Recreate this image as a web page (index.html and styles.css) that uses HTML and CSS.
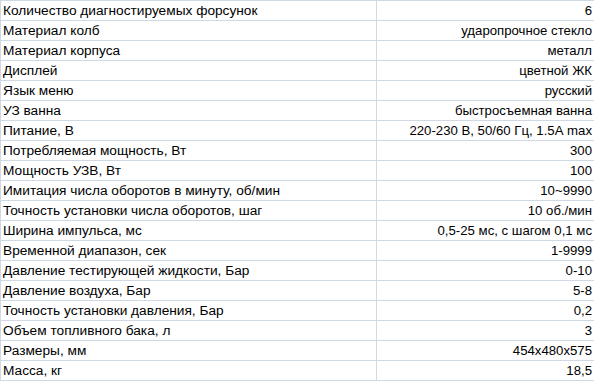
FILE: index.html
```html
<!DOCTYPE html>
<html lang="ru">
<head>
<meta charset="utf-8">
<title>Характеристики</title>
<link rel="stylesheet" href="styles.css">
</head>
<body>
<div class="sheet">
  <div class="row"><div class="name">Количество диагностируемых форсунок</div><div class="val">6</div></div>
  <div class="row"><div class="name">Материал колб</div><div class="val">ударопрочное стекло</div></div>
  <div class="row"><div class="name">Материал корпуса</div><div class="val">металл</div></div>
  <div class="row"><div class="name">Дисплей</div><div class="val">цветной ЖК</div></div>
  <div class="row"><div class="name">Язык меню</div><div class="val">русский</div></div>
  <div class="row"><div class="name">УЗ ванна</div><div class="val">быстросъемная ванна</div></div>
  <div class="row"><div class="name">Питание, В</div><div class="val">220-230 В, 50/60 Гц, 1.5А max</div></div>
  <div class="row"><div class="name">Потребляемая мощность, Вт</div><div class="val">300</div></div>
  <div class="row"><div class="name">Мощность УЗВ, Вт</div><div class="val">100</div></div>
  <div class="row"><div class="name">Имитация числа оборотов в минуту, об/мин</div><div class="val">10~9990</div></div>
  <div class="row"><div class="name">Точность установки числа оборотов, шаг</div><div class="val">10 об./мин</div></div>
  <div class="row"><div class="name">Ширина импульса, мс</div><div class="val">0,5-25 мс, с шагом 0,1 мс</div></div>
  <div class="row"><div class="name">Временной диапазон, сек</div><div class="val">1-9999</div></div>
  <div class="row"><div class="name">Давление тестирующей жидкости, Бар</div><div class="val">0-10</div></div>
  <div class="row"><div class="name">Давление воздуха, Бар</div><div class="val">5-8</div></div>
  <div class="row"><div class="name">Точность установки давления, Бар</div><div class="val">0,2</div></div>
  <div class="row"><div class="name">Объем топливного бака, л</div><div class="val">3</div></div>
  <div class="row"><div class="name">Размеры, мм</div><div class="val">454x480x575</div></div>
  <div class="row"><div class="name">Масса, кг</div><div class="val">18,5</div></div>
</div>
</body>
</html>
```

FILE: styles.css
```css
html, body {
  margin: 0;
  padding: 0;
  background: #ffffff;
}

.sheet {
  width: 594px;
  border-top: 1px solid #d0d7e5;
  font-family: "Liberation Sans", Arial, sans-serif;
  font-size: 13.7px;
  color: #000000;
}

.row {
  display: grid;
  grid-template-columns: 376px 1fr;
  height: 19px;
  border-bottom: 1px solid #d0d7e5;
  border-left: 1px solid #d0d7e5;
}

.name,
.val {
  line-height: 20px;
  white-space: nowrap;
  overflow: hidden;
}

.name {
  padding-left: 2px;
  border-right: 1px solid #d0d7e5;
}

.val {
  text-align: right;
  padding-right: 2px;
  font-size: 13.2px;
}
```
